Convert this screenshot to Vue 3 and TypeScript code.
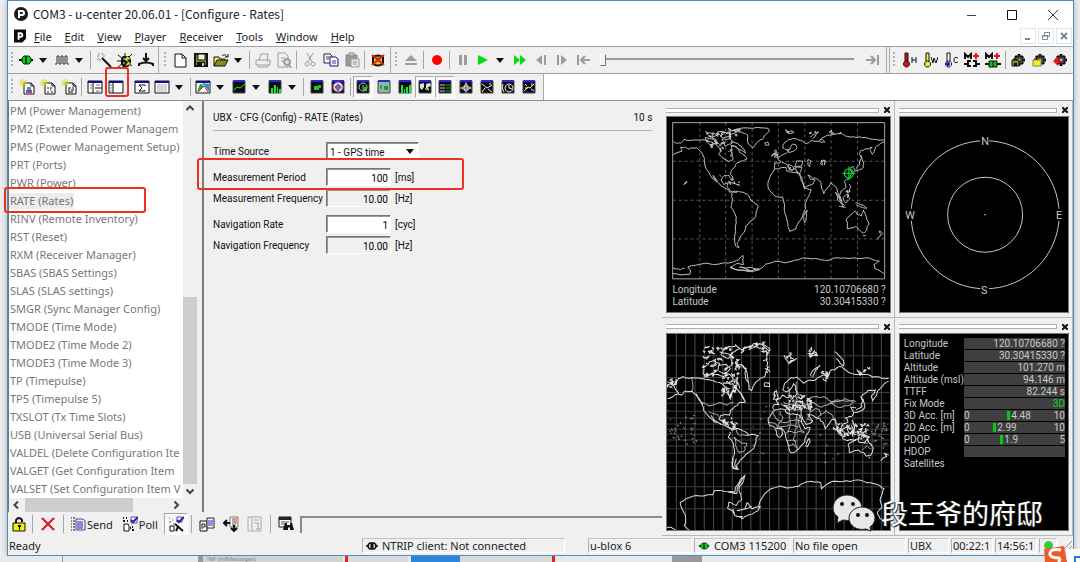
<script setup lang="ts">
import { h, ref, type FunctionalComponent } from 'vue'

type Shape = [d: string, fill: string, stroke?: string, width?: number]
type Tool = { k: 'icon' | 'split' | 'sep' | 'slider'; icon?: string; label?: string; pressed?: boolean }

const K = '#111'
const G = '#9c9c9c'
const NAVY = '#10108c'
const frame = (body: string): Shape[] => [['M1 2h14v12H1z', body, K, 1], ['M1 2h14v2H1z', NAVY]]
const dark = (...rest: Shape[]): Shape[] => [['M2 2h12v12H2z', '#0c0c0c', '#444', 1], ['M2 1h12v2H2z', '#2a2ad0'], ...rest]
const sheet: Shape[] = [['M5 4h7l3 3v8H5z', '#fff', K, 1], ['M12 4v3h3', 'none', K, 1], ['M1 1l6 6M7 1L1 7M4 0v8M0 4h8', 'none', '#d8d820', 1]]
const gear: Shape[] = [['M8 2v12M2 8h12M4 4l8 8M12 4l-8 8', 'none', K, 3], ['M8 4a4 4 0 1 0 .1 0z', '#555', K, 1], ['M8 6a2 2 0 1 0 .1 0z', '#ddd', K, 1]]
const thermo = (c: string): Shape[] => [['M4 1h3v9H4z', c, K, 1], ['M5.500 9a3 3 0 1 0 .1 0z', c, K, 1]]

const icons: Record<string, Shape[]> = {
  plug: [['M1 8h14', 'none', K, 2], ['M4 6l2-2h5l2 2v4l-2 2H6l-2-2z', '#1c1', '#031', 1], ['M8 4v8', 'none', '#042', 2]],
  unplug: [['M0 8h3M13 8h3', 'none', K, 2], ['M7 4H5L3 6v4l2 2h2zM9 4h2l2 2v4l-2 2H9z', '#ddd', K, 2]],
  wave: [['M1 12h2V4h2v8h2V4h2v8h2V4h2v8h2', 'none', '#333', 1]],
  wand: [['M6 6l9 9', 'none', K, 2], ['M3 1v2M1 4h2M7 1L6 3M1 8l2-2M9 4H7M4 9V7', 'none', '#887', 1]],
  bug: [['M6 4h6l2 3v5l-3 3H6l-2-3V7z', K], ['M1 3l4 3M0 9h5M1 15l4-3M15 2l-3 3M15 14l-4-3M8 1v3', 'none', K, 1], ['M10 4l4 3-4 1 4 4-6 2 3-4-3-2z', '#e3d41c'], ['M6 7h3M6 11h2', 'none', '#eee', 1]],
  dock: [['M8 1v8M5 6l3 3 3-3', 'none', K, 2], ['M1 14v-2q7-3 14 0v2', 'none', K, 2]],
  blank: [['M3 2h7l4 4v9H3z', '#fff', K, 1], ['M10 2v4h4', 'none', K, 1]],
  save: [['M2 2h12v12H2z', '#8a8a18', K, 2], ['M5 2h7v6H5z', '#eee', K, 1], ['M4 10h8v4H4z', K], ['M9 11h2v3H9z', '#ccc']],
  open: [['M1 14V5h5l1 2h5v2', '#f0ec70', K, 1], ['M1 14l3-6h11l-3 6z', '#8d8a1a', K, 1], ['M9 4q3-3 5 1M12 5h3V2', 'none', K, 1]],
  print: [['M4 8l2-6h7l-1 6M1 8h14v5H1zM3 13v2h10v-2M12 10h1', 'none', G, 1]],
  preview: [['M2 1h7l3 3v11H2zM5 6h4M5 9h3', 'none', G, 1], ['M11 7a3 3 0 1 0 .1 0zM13 13l2 3', '#ddd', G, 2]],
  cut: [['M5 1l5 9M11 1L6 10M5 10a2 2 0 1 0 .1 0zM11 10a2 2 0 1 0 .1 0z', 'none', G, 1]],
  copy: [['M1 2h6l2 2v7H1z', '#fff', '#223', 1], ['M7 5h6l2 2v7H7z', '#fff', NAVY, 1], ['M3 5h4M3 7h3M9 9h4M9 11h4', 'none', '#338', 1]],
  paste: [['M2 3h11v11H2z', '#999', '#888', 1], ['M5 1h5v3H5z', '#ccc', '#888', 1], ['M7 7h8v8H7z', '#e6e6e6', '#999', 1], ['M9 10h4M9 12h4', 'none', '#999', 1]],
  purge: [['M3 5q5-3 10 0v7q-5 3-10 0z', '#e0c81c', K, 2], ['M3 5q5 3 10 0', 'none', K, 1], ['M2 3l12 10M14 3L2 13', 'none', '#e2231a', 2]],
  eject: [['M8 3l6 6H2zM2 11h12v2H2z', G]],
  record: [['M8 3a5 5 0 1 0 .1 0z', '#f00']],
  pause: [['M4 3h3v10H4zM9 3h3v10H9z', G]],
  play: [['M3 3l10 5-10 5z', '#0d1']],
  fast: [['M2 3l6 5-6 5zM8 3l6 5-6 5z', '#0d1']],
  back: [['M9 3v10L3 8zM11 3h2v10h-2z', G]],
  fwd: [['M7 3v10l6-5zM3 3h2v10H3z', G]],
  home: [['M3 3v10M15 8H6M10 4L6 8l4 4', 'none', G, 2]],
  end: [['M13 3v10M1 8h9M6 4l4 4-4 4', 'none', G, 2]],
  hot: [...thermo('#d11'), ['M11 5v6M15 5v6M11 8h4', 'none', K, 1]],
  warm: [...thermo('#ee3'), ['M9 5l2 6 1-5 2 5 2-6', 'none', K, 1]],
  cold: [...thermo('#fff'), ['M5 10a2 2 0 1 0 .1 0z', '#11c'], ['M15 6q-4-2-4 2t4 2', 'none', K, 1]],
  memo: [['M1 7V2l3 3 3-3v5', 'none', K, 2], ['M12 1v6M9 4h6', 'none', '#e11', 2], ['M0 12h3M7 9H4v5h3M9 9h3v5H9M13 12h3', 'none', K, 2]],
  memoOn: [['M1 7V2l3 3 3-3v5', 'none', K, 2], ['M12 1v6M9 4h6', 'none', '#e11', 2], ['M0 12h16', 'none', K, 2], ['M4 9h8v6H4z', '#1b2', K, 1], ['M8 9v6', 'none', K, 1]],
  gearSave: [...gear, ['M1 8h7v6H1z', '#8a8a18', K, 1], ['M3 11h3v3H3z', K]],
  gearOpen: [...gear, ['M1 8h8v6H1z', '#f4ee30', '#883', 1]],
  gearRed: [...gear, ['M0 9l5-4v3h3v3H5v3z', '#e11']],
  newTable: [...sheet, ['M7 11h6v3H7z', '#a3c'], ['M8 8h4v3H8z', '#2b5']],
  newBin: [...sheet, ['M8 8v2M8 12v2M11 8v2M12 12v2M10 11h1', 'none', K, 1]],
  newText: [...sheet, ['M7 9h3M11 9h2M7 11h2M10 11h3M7 13h5', 'none', K, 1]],
  split: [...frame('#fff'), ['M6 4v10M8 9h7', 'none', K, 1], ['M3 6h2M3 9h2M9 6h4M9 12h4', 'none', '#777', 1]],
  pane: [...frame('#fff'), ['M5 4v10', 'none', K, 1], ['M2 6h2M2 9h2M2 12h2', 'none', '#777', 1]],
  sigma: [...frame('#fff'), ['M11 7V6H5l3 3-3 3h6v-1', 'none', K, 1]],
  table: [...frame('#fff'), ['M3 6h10M3 8h10M3 10h10M3 12h10', 'none', '#aab', 1]],
  chart: [...frame('#fff'), ['M2 13l3-8 4 1-3 4z', '#1a3'], ['M7 4l7 1v8l-4-6z', '#28e'], ['M3 13l6-6 4 6', 'none', '#c22', 1]],
  line: dark(['M3 11l3-3 3 1 5-4', 'none', '#1e3', 1]),
  bars: dark(['M4 9h2v5H4zM7 6h2v8H7zM10 8h1v6h-1zM12 10h2v4h-2z', '#1e3']),
  dots: dark(['M5 7h5v4H5z', '#1c3'], ['M9 6h3v3H9z', '#2a6']),
  globe: dark(['M8 3a5 5 0 1 0 .1 0z', '#dde', '#a3a', 1], ['M5 8l3-3 3 3-3 4z', '#28d', '#d33', 1]),
  radar: dark(['M8 4a4 4 0 1 0 .1 0zM8 6v4l4 2', 'none', '#aca', 1], ['M9 8h3v3H9z', '#1c3']),
  map: [['M2 2h12v12H2z', '#8b9', '#444', 1], ['M2 1h12v2H2z', '#2a2ad0'], ['M8 7h4v4H8z', '#385'], ['M4 6h2v4H4z', '#587']],
  levels: dark(['M4 6h2v8H4zM7 10h1v4H7zM9 8h2v6H9zM12 6h2v8h-2z', '#1e3']),
  world: dark(['M3 5l4-1v4l-2 3-2-2zM9 5l4-1 1 3-3 1 1 4-3-2z', '#dedede'], ['M8 9h2v2H8z', '#1c3']),
  list: dark(['M3 6h5M3 9h5M3 12h5', 'none', '#ccc', 1], ['M9 6h5M9 9h5M9 12h5', 'none', '#1b3', 1]),
  compass: dark(['M8 3l2 4 4 2-4 2-2 3-2-3-4-2 4-2z', '#ddd'], ['M8 5v8M4 9h8', 'none', '#666', 1]),
  gauge: dark(['M3 5l5 4M8 9l5-3M9 10l4 3M3 13l3-4M11 4v2', 'none', '#eee', 1]),
  clock: dark(['M9 5a4 4 0 1 0 .1 0zM9 6v3l3 1M3 5q-2 4 1 8', 'none', '#eee', 1]),
  trend: dark(['M3 12l4-4 2 1 4-4M4 5l2 2M10 10l3 2M4 9h3M11 4v3', 'none', '#eee', 1]),
  lock: [['M5 8V4q3-4 6 0v2', 'none', K, 2], ['M2 7h12v8H2z', '#f2ee12', K, 1], ['M7 9h3v2H9v3H8v-3H7z', K]],
  cross: [['M2 2l12 12M14 2L2 14', 'none', '#d8161b', 2]],
  send: [['M6 3h7l2 2v9H6z', '#eef', '#448', 1], ['M7 6h6M7 8h6M7 10h6M7 12h6', 'none', '#22a', 1], ['M1 2h1M3 2h2M1 5h1M3 5h2M1 8h1M3 8h2M1 11h1M3 11h2M1 14h1M3 14h2', 'none', K, 1]],
  poll: [['M2 8h4l1 2v5H2z', '#fff', K, 1], ['M1 2h1M4 2h1M1 5h2M5 5h1M10 11h1M10 14h2M8 12h1', 'none', K, 2], ['M9 1h6v6H9z', '#fff', '#557', 1], ['M9 4l2 2 5-5', 'none', '#22c', 2]],
  auto: [['M2 10h4v5H2z', '#fff', K, 1], ['M1 2h1M4 4h1M1 6h2M5 8h2', 'none', '#665', 1], ['M9 1h5v5H9z', '#fff', '#557', 1], ['M9 4l2 2 5-5', 'none', '#22c', 2], ['M7 8l8 7M8 15l2-4', 'none', K, 2]],
  pages: [['M1 5h7v10H1z', '#fff', K, 1], ['M3 13V8h3v3H4', 'none', K, 1], ['M8 2h7v10H8z', '#fff', '#223', 1], ['M9 5h5M9 7h5M9 9h5', 'none', '#22c', 1]],
  move: [['M7 1h8v10H7z', '#fff', '#777', 1], ['M9 3h5M9 5h5', 'none', '#d22', 1], ['M9 7h5M9 9h4', 'none', '#282', 1], ['M7 7H1M4 4L1 7l3 3M11 9v6M8 12l3 3 3-3', 'none', K, 2]],
  ghost: [['M1 1h13v14H1zM5 1v14M7 4h5M7 7h5M11 7v7M9 12l2 2 2-2', 'none', '#aaa', 1]],
  find: [['M1 1h12v10H1z', '#fff', K, 1], ['M1 1h12v3H1z', '#223'], ['M3 6h8M3 8h5', 'none', '#555', 1], ['M7 7h2v2h3V7h2l2 7h-4v-3h-2v3H5z', K]],
}

const Glyph: FunctionalComponent<{ name: string }> = (p) =>
  h('svg', { width: 16, height: 16, viewBox: '0 0 16 16', 'aria-hidden': 'true' },
    (icons[p.name] ?? []).map(([d, fill, stroke, w]) =>
      h('path', { d, fill, stroke: stroke ?? 'none', 'stroke-width': w ?? 0 })))
Glyph.props = ['name']

const i = (icon: string, label: string, pressed = false): Tool => ({ k: 'icon', icon, label, pressed })
const s = (icon: string, label: string): Tool => ({ k: 'split', icon, label })
const sep: Tool = { k: 'sep' }

const bands: { cls: string; tools: Tool[] }[] = [
  { cls: 'b1', tools: [s('plug', 'Connection'), s('wave', 'Baudrate'), sep, i('wand', 'Autobauding'), i('bug', 'Debug messages'), i('dock', 'Download')] },
  { cls: 'b2', tools: [i('blank', 'New'), i('save', 'Save'), s('open', 'Open'), sep, i('print', 'Print'), i('preview', 'Print preview'), sep, i('cut', 'Cut'), i('copy', 'Copy'), i('paste', 'Paste'), sep, i('purge', 'Clear database')] },
  { cls: 'b3', tools: [i('eject', 'Eject'), sep, i('record', 'Record'), sep, i('pause', 'Pause'), s('play', 'Play'), i('fast', 'Fast forward'), i('back', 'Step back'), i('fwd', 'Step forward'), i('home', 'Go to start'), { k: 'slider' }, i('end', 'Go to end')] },
  { cls: 'b4', tools: [i('hot', 'Hotstart'), i('warm', 'Warmstart'), i('cold', 'Coldstart'), i('memo', 'Save settings'), i('memoOn', 'Save settings now'), sep, i('gearSave', 'Save configuration'), i('gearOpen', 'Load configuration'), i('gearRed', 'Revert configuration')] },
]
const viewTools: Tool[] = [
  i('newTable', 'New table'), i('newBin', 'New binary console'), i('newText', 'New text console'), sep,
  i('split', 'Messages view'), i('pane', 'Configuration view'), sep,
  i('sigma', 'Statistic view'), s('table', 'Table view'), sep,
  s('chart', 'Chart view'), s('line', 'Histogram'), s('bars', 'Bar view'), sep,
  i('dots', 'Deviation map'), i('globe', 'Sky view'), sep,
  i('radar', 'Satellite position', true), i('map', 'Map'), i('levels', 'Satellite level'), i('world', 'World position', true),
  i('list', 'Data view', true), i('compass', 'Compass'), i('gauge', 'Speed'), i('clock', 'Clock'), i('trend', 'Altitude'),
]

const menus = ['File', 'Edit', 'View', 'Player', 'Receiver', 'Tools', 'Window', 'Help']
const messages = [
  'PM (Power Management)', 'PM2 (Extended Power Managem', 'PMS (Power Management Setup)', 'PRT (Ports)', 'PWR (Power)',
  'RATE (Rates)', 'RINV (Remote Inventory)', 'RST (Reset)', 'RXM (Receiver Manager)', 'SBAS (SBAS Settings)',
  'SLAS (SLAS settings)', 'SMGR (Sync Manager Config)', 'TMODE (Time Mode)', 'TMODE2 (Time Mode 2)', 'TMODE3 (Time Mode 3)',
  'TP (Timepulse)', 'TP5 (Timepulse 5)', 'TXSLOT (Tx Time Slots)', 'USB (Universal Serial Bus)',
  'VALDEL (Delete Configuration Ite', 'VALGET (Get Configuration Item', 'VALSET (Set Configuration Item V',
]
const selected = ref('RATE (Rates)')

const groups = [
  [{ id: 'period', label: 'Measurement Period', value: '100', unit: '[ms]', ro: false }, { id: 'mfreq', label: 'Measurement Frequency', value: '10.00', unit: '[Hz]', ro: true }],
  [{ id: 'nrate', label: 'Navigation Rate', value: '1', unit: '[cyc]', ro: false }, { id: 'nfreq', label: 'Navigation Frequency', value: '10.00', unit: '[Hz]', ro: true }],
]

const data = [
  { n: 'Longitude', v: '120.10706680 ?' }, { n: 'Latitude', v: '30.30415330 ?' }, { n: 'Altitude', v: '101.270 m' },
  { n: 'Altitude (msl)', v: '94.146 m' }, { n: 'TTFF', v: '82.244 s' }, { n: 'Fix Mode', v: '3D', green: true },
  { n: '3D Acc. [m]', min: '0', v: '10', bar: '4.48', at: 43 }, { n: '2D Acc. [m]', min: '0', v: '10', bar: '2.99', at: 29 },
  { n: 'PDOP', min: '0', v: '5', bar: '1.9', at: 36 }, { n: 'HDOP', v: '' }, { n: 'Satellites' },
]

// Coastlines are coarse polylines; midpoint displacement with a seeded generator gives them a ragged shore.
let seed = 7
const rnd = () => ((seed = (seed * 16807) % 2147483647) / 2147483647) - 0.5
function coast(lines: string[], rough: number, depth: number): string {
  return lines.map((line) => {
    const n = line.trim().split(/[ ,]+/).map(Number)
    let pts: number[][] = []
    for (let a = 0; a < n.length; a += 2) pts.push([n[a], n[a + 1]])
    for (let r = 0; r < depth; r++) {
      const next: number[][] = [pts[0]]
      for (let a = 1; a < pts.length; a++) {
        const [p, q] = [pts[a - 1], pts[a]]
        const len = Math.hypot(q[0] - p[0], q[1] - p[1]) * rough
        next.push([(p[0] + q[0]) / 2 + rnd() * len, (p[1] + q[1]) / 2 + rnd() * len], q)
      }
      pts = next
    }
    return 'M' + pts.map((p) => `${Math.round(p[0])} ${Math.round(p[1])}`).join('L')
  }).join('')
}
function isles(boxes: number[][], size: number): string {
  let d = ''
  for (const [x, y, w, hh, count] of boxes) {
    for (let c = 0; c < count; c++) {
      const r = () => Math.round(rnd() * size)
      d += `M${Math.round(x + (rnd() + 0.5) * w)} ${Math.round(y + (rnd() + 0.5) * hh)}l${r()} ${r()} ${r()} ${r()} ${r()} ${r()}z`
    }
  }
  return d
}

const worldA = coast([
  '40,125 50,130 62,130 72,118 105,120 135,120 160,128 178,142 182,152 178,165 190,176 208,186 220,180 218,165 214,150 216,138 230,140 240,158 255,166 262,178 245,184 232,190 226,202 216,212 212,225 220,236 216,240 208,228 192,230 184,242 192,256 206,250 202,262 212,276 232,280',
  '40,165 66,154 62,142 76,142 86,148 110,144 126,158 134,176 136,200 148,220 158,238 170,248 160,228 172,244 182,258 204,270 214,282',
  '216,282 224,276 240,278 264,286 274,304 296,322 290,340 286,358 272,368 254,402 240,420 233,436 238,450 228,444 228,400 230,355 214,325 218,300 216,282',
  '232,88 270,84 298,82 326,84 330,94 318,104 312,115 294,126 280,144 270,136 264,120 264,104 250,98 232,88',
  '345,208 362,206 380,203 382,215 396,218 420,222 426,244 434,266 456,272 448,292 438,312 440,328 432,345 420,368 410,392 392,400 386,380 380,350 376,318 370,294 345,290 328,270 326,252 332,232 345,208',
  '434,348 444,334 442,354 436,372 432,360 434,348',
  '345,206 346,190 364,188 354,174 372,164 384,158 386,148 390,160 404,154 412,146 410,134 400,132 392,148 380,150 370,144 374,130 394,118 412,116 432,124 440,132 456,122 480,124 492,112 520,104 548,100 560,108 590,112 620,112 650,118 676,120',
  '676,126 664,132 650,142 640,164 634,152 640,142 618,148 604,154 602,164 608,176 602,196 592,204',
  '368,188 380,194 390,208 388,194 404,206 410,212 410,202 428,204 424,216 422,224 430,244 436,266 462,254 468,242 452,238 446,226 460,236 476,240 486,250 494,284 500,272 516,250 530,262 536,280 548,308 542,290 546,276 562,264 556,246 572,238 580,222 572,206 582,200 590,212 596,204',
  '406,202 412,184 430,184 426,200 406,202', '446,180 456,184 452,202 446,196 446,180',
  '346,152 350,150 356,172 344,172 350,164 346,152', '316,128 326,126 328,136 318,136 316,128',
  '584,216 600,212 614,204 612,184 606,166', '530,280 542,300 556,320 552,324 536,304 530,280', '552,296 566,284 572,300 560,312 552,296',
  '570,254 576,262 572,280', '590,312 600,314 624,328 612,326 592,318', '540,322 560,326',
  '562,362 566,392 590,384 602,396 614,404 624,396 630,374 622,352 614,334 608,352 594,346 590,336 576,348 562,362',
  '656,424 668,410 662,398 674,408', '612,412 622,412',
  '38,510 62,516 74,512', '38,528 90,530 92,520 84,508 110,502 150,498 180,498 214,494 236,486 250,472 252,500 230,498 212,508 240,518 270,522 300,514 320,498 346,490 400,490 430,480 480,484 500,488 540,480 570,482 620,480 650,488 662,490 646,500 650,514 664,520 678,528',
  '212,510 300,516 240,508 276,520', '140,100 160,98 176,104 150,110 140,100', '136,112 160,118 174,126 150,134 140,126 136,112',
  '172,96 200,98 212,90 206,110 190,114 172,96', '212,92 232,86 244,88 222,100 210,104', '186,118 210,116 226,128 246,140 258,160 240,150 226,140 210,132 196,138 186,118',
  '206,156 218,148 214,172', '454,112 470,98 478,96 460,116', '480,122 488,118 498,126 482,126', '380,96 400,92 404,98 386,100', '180,226 184,232', '210,248 240,258 232,254',
], 0.2, 2) + isles([[140, 96, 75, 50, 26], [205, 85, 45, 20, 6], [380, 94, 180, 8, 8], [210, 240, 30, 16, 4], [560, 270, 20, 30, 4], [344, 150, 16, 26, 3], [460, 180, 40, 10, 4], [388, 204, 30, 14, 3], [72, 244, 8, 4, 1]], 12)

const bordersB = coast([
  '96,188 96,228', '124,262 180,262 200,270 222,262', '148,290 172,298 176,304', '222,366 240,378 262,384 256,404 240,412 232,400 222,366', '230,344 242,360 268,360',
  '340,290 356,316 380,322 402,316 424,320', '326,322 352,330 372,334 398,330 420,336', '388,290 392,318 384,352', '412,300 410,340 402,370 414,396', '380,352 410,352 434,350', '384,376 412,378', '384,392 402,386 414,400', '362,288 366,318 352,340', '424,300 424,344 436,352',
  '386,240 400,260 424,258 440,270 462,262 486,276 500,270 520,258 552,256 590,260', '440,256 472,244 500,248 516,260', '512,266 540,276 566,272 580,262 556,250 526,256 512,266', '372,260 390,268 380,282 396,286', '400,240 412,248 408,270 430,274', '388,264 402,272 420,268', '396,278 412,284 430,280', '436,276 452,290 478,282 484,300 470,312', '484,300 500,286 520,302 528,312', '452,290 444,312 460,316', '528,312 536,330', '544,322 552,336', '384,216 390,240 402,248', '412,200 410,228 424,240',
], 0.35, 2)
const worldB = coast([
  '24,200 40,210 50,208 56,190 70,184 94,188 130,190 156,196 180,202 200,216 206,234 212,252 216,236 222,220 230,214 244,236 258,260 240,262 226,274 212,286 210,300 200,298 184,300 178,312 192,324 206,320 206,334 220,342 232,342',
  '24,250 44,240 56,236 66,240 74,228 96,228 108,238 122,256 128,270 132,286 146,302 164,320 180,324 204,336 216,344',
  '216,346 230,340 258,350 268,360 296,362 288,384 282,400 262,416 244,432 232,448 236,462 222,456 218,430 224,400 222,386 206,366 212,350',
  '222,430 218,458 234,462 226,446 230,430', '40,208 58,238', '110,236 130,266', '154,300 184,328',
  '246,104 262,98 290,84 318,92 332,104 322,116 324,142 322,168 316,184 290,200 276,226 268,222 258,190 260,160 246,148 226,146',
  '250,100 280,92 300,100 322,100', '244,150 262,170 268,216', '268,104 300,86 330,108',
  '130,160 150,140 164,136 180,146 176,164 150,180 130,176 134,162', '184,120 208,94 230,92 240,100 220,112 206,130 186,122', '176,152 200,148 212,160 196,176 178,168', '190,204 220,206 242,232 256,258', '204,176 230,196 240,220', '198,230 212,240 210,250', '180,110 214,120 216,150 196,160', '150,176 190,184 206,180',
  '340,288 350,284 378,284 380,292 408,298 420,300 426,320 436,340 452,338 440,360 436,380 420,398 408,410 392,410 384,380 378,356 366,338 350,340 332,332 326,310 340,288',
  '346,342 352,360 362,366 370,356 366,342 350,340', '440,388 448,370 452,380 444,394 438,390',
  '342,284 342,270 358,268 350,256 362,250 370,240 384,248 394,240 400,250 412,236 410,216 402,206 392,224 380,230 370,222 376,204 394,188 412,186 432,204 446,196 468,194 480,186 490,180 504,186 512,168 540,154 560,166 580,176 610,178 640,186 664,188 688,190',
  '688,198 670,212 656,226 640,256 636,244 648,224 626,226 612,238 604,244 610,256 606,276 590,284', '586,292 602,288 616,278 614,262 606,246',
  '366,266 380,274 390,286 388,272 402,282 408,286 410,276 428,278 424,296 430,312 440,328 460,318 452,306 444,298 466,304 480,310 490,320 498,340 506,330 520,312 530,320 534,336 546,358 544,340 552,326 566,320 558,308 576,304 584,292 574,276 590,278',
  '406,272 412,258 430,258 426,272 406,272', '444,252 456,256 456,276 446,270 444,252', '344,230 350,226 356,250 342,252 348,242 344,230', '340,236 346,238 342,246', '314,204 330,204 330,214 316,214 314,204',
  '376,130 390,122 404,134 388,146 376,130', '444,116 470,112 474,122 448,122', '454,184 462,164 482,150 468,166 460,188', '526,110 550,134 552,152 530,130', '484,172 504,176 500,198 490,190',
  '530,338 542,352 556,364 550,366 536,350 530,338', '548,344 562,334 568,350 556,360 548,344', '578,314 586,330 584,346 576,330', '570,356 578,346 580,364', '590,350 604,350 632,366 616,364 592,356', '548,370 590,376',
  '566,386 570,412 596,404 612,412 620,422 634,420 642,400 634,386 624,370 616,384 600,382 596,370 580,378 566,386', '664,436 682,424 676,414 688,420', '628,424 632,430',
  '22,636 36,636 50,646', '88,644 74,630 72,590 62,560 84,548 110,540 160,538 164,526 196,528 226,530 234,508 244,490 256,480 250,500 238,524 246,552 230,570 208,560 204,578 226,600 248,610 278,596 302,574 278,580 262,562 256,580 232,586 276,572', '296,576 310,544 334,520 400,516 430,504 456,498 484,502 486,520 510,502 560,496 600,494 648,506 674,520 664,546 668,576 654,590 662,610 686,618',
  '206,530 232,534 250,488', '220,580 226,600 250,604',
], 0.25, 2) + isles([[130, 95, 110, 90, 44], [180, 170, 55, 70, 22], [376, 118, 30, 26, 8], [530, 326, 100, 44, 30], [370, 240, 90, 50, 24], [180, 300, 60, 36, 12], [486, 170, 20, 26, 6], [26, 188, 30, 30, 8], [440, 108, 34, 14, 6], [250, 85, 76, 22, 12], [316, 104, 12, 70, 8], [600, 160, 40, 22, 6]], 12)
const specks = isles([[26, 280, 90, 110, 34], [610, 320, 76, 80, 50], [280, 270, 50, 190, 12], [480, 360, 60, 90, 6]], 6)
const gridX = Array.from({ length: 23 }, (_, a) => 50 + a * 28)
const gridY = [122, 187, 232, 264, 288, 308, 326, 342, 357, 374, 392, 414, 440, 474, 514, 580]
</script>

<template>
  <div class="desktop">
    <main class="window">
      <header class="titlebar">
        <svg class="logo" viewBox="0 0 14 14"><circle cx="7" cy="7" r="7" fill="#1b1b22" /><path d="M5 11V4h3a2 2 0 0 1 0 4H6" fill="none" stroke="#fff" stroke-width="2" /></svg>
        <h1>COM3 - u-center 20.06.01 - [Configure - Rates]</h1>
        <div class="caption">
          <button aria-label="Minimize"><svg viewBox="0 0 12 12"><path d="M2 6.500h9" stroke="#444" /></svg></button>
          <button aria-label="Maximize"><svg viewBox="0 0 12 12"><path d="M1.500 1.500h9v9h-9z" fill="none" stroke="#111" /></svg></button>
          <button aria-label="Close"><svg viewBox="0 0 12 12"><path d="M1 1l10 10M11 1L1 11" stroke="#333" /></svg></button>
        </div>
      </header>

      <nav class="menubar">
        <svg class="logo" viewBox="0 0 13 14"><path d="M0 0h13v10l-4 4H0z" fill="#0c0c10" /><path d="M5 11V4h2a2 2 0 0 1 0 4H6" fill="none" stroke="#fff" stroke-width="2" /></svg>
        <button v-for="m in menus" :key="m"><u>{{ m[0] }}</u>{{ m.slice(1) }}</button>
        <div class="mdi">
          <button aria-label="Minimize child"><svg viewBox="0 0 10 10"><path d="M2 8h5" stroke="#789" stroke-width="2" /></svg></button>
          <button aria-label="Restore child"><svg viewBox="0 0 10 10"><path d="M3.500 4V1.500h5v4H7M1.500 4.500h5v4h-5zM1 5h6" fill="none" stroke="#789" /></svg></button>
          <button aria-label="Close child"><svg viewBox="0 0 10 10"><path d="M2 2l6 6M8 2L2 8" stroke="#789" stroke-width="2" /></svg></button>
        </div>
      </nav>

      <div class="bar-row">
        <div v-for="b in bands" :key="b.cls" class="band" :class="b.cls">
          <i class="grip"></i>
          <template v-for="(t, n) in b.tools" :key="n">
            <i v-if="t.k === 'sep'" class="sep"></i>
            <input v-else-if="t.k === 'slider'" class="track" type="range" min="0" max="100" value="0" aria-label="Playback position" />
            <button v-else class="tool" :class="{ split: t.k === 'split' }" :aria-label="t.label">
              <Glyph :name="t.icon!" /><i v-if="t.k === 'split'" class="drop"></i>
            </button>
          </template>
        </div>
      </div>

      <div class="bar-row views">
        <div class="band bv">
          <i class="grip"></i>
          <template v-for="(t, n) in viewTools" :key="n">
            <i v-if="t.k === 'sep'" class="sep"></i>
            <button v-else class="tool" :class="{ split: t.k === 'split', pressed: t.pressed }" :aria-label="t.label">
              <Glyph :name="t.icon!" /><i v-if="t.k === 'split'" class="drop"></i>
            </button>
          </template>
        </div>
      </div>

      <section class="workspace">
        <div class="editor">
          <div class="panes">
            <aside class="tree">
              <div class="tree-main">
                <ul>
                  <li v-for="m in messages" :key="m">
                    <button :class="{ on: m === selected }" @click="selected = m">{{ m }}</button>
                  </li>
                </ul>
                <div class="vscroll">
                  <svg viewBox="0 0 14 14"><path d="M3.500 9L7 5.500 10.500 9" /></svg>
                  <div class="thumb"></div>
                  <svg viewBox="0 0 14 14"><path d="M3.500 5.500L7 9l3.500-3.500" /></svg>
                </div>
              </div>
              <div class="hscroll">
                <svg viewBox="0 0 14 14"><path d="M9 3.500L5.500 7 9 10.500" /></svg>
                <div class="rail"><div class="thumb"></div></div>
                <svg viewBox="0 0 14 14"><path d="M5.500 3.500L9 7l-3.500 3.500" /></svg>
              </div>
            </aside>

            <form class="form" @submit.prevent>
              <div class="form-head"><span>UBX - CFG (Config) - RATE (Rates)</span><span>10 s</span></div>
              <div class="group">
                <div class="field">
                  <label for="source">Time Source</label>
                  <span class="pick"><select id="source"><option>1 - GPS time</option></select><i class="drop"></i></span>
                </div>
              </div>
              <div v-for="(g, n) in groups" :key="n" class="group">
                <div v-for="f in g" :key="f.id" class="field">
                  <label :for="f.id">{{ f.label }}</label>
                  <input :id="f.id" type="text" :value="f.value" :readonly="f.ro" />
                  <span>{{ f.unit }}</span>
                </div>
              </div>
            </form>
          </div>

          <div class="actions">
            <button class="tool" aria-label="Lock"><Glyph name="lock" /></button><i class="sep"></i>
            <button class="tool" aria-label="Delete"><Glyph name="cross" /></button><i class="sep"></i>
            <button class="text"><Glyph name="send" />Send</button>
            <button class="text"><Glyph name="poll" />Poll</button>
            <button class="tool pressed" aria-label="Auto poll"><Glyph name="auto" /></button><i class="sep"></i>
            <button class="tool" aria-label="Copy page"><Glyph name="pages" /></button>
            <button class="tool" aria-label="Transfer"><Glyph name="move" /></button>
            <button class="tool" aria-label="Details"><Glyph name="ghost" /></button><i class="sep"></i>
            <button class="tool" aria-label="Find"><Glyph name="find" /></button>
            <input type="text" class="query" aria-label="Search" />
          </div>
        </div>

        <div class="docks">
          <article class="dock">
            <div class="dock-head"><i></i><button aria-label="Close map"><svg viewBox="0 0 6 6"><path d="M0 0l6 6M6 0L0 6" /></svg></button></div>
            <div class="screen">
              <svg class="fill" viewBox="36 65 644 481" preserveAspectRatio="none">
                <g fill="none">
                  <path d="M120 67v477M198 67v477M278 67v477M357 67v477M437 67v477M516 67v477M596 67v477M38 185h640M38 304h640M38 422h640" stroke="#5a5a5a" stroke-width="3" stroke-dasharray="9 9" />
                  <path :d="worldA" stroke="#c4c4c4" stroke-width="3" />
                  <path d="M38 67h640v477H38z" stroke="#aaa" stroke-width="3" />
                  <path d="M570 208a14 14 0 1 0 .1 0zM570 202v40M550 222h40" stroke="#0c2" stroke-width="4" />
                </g>
              </svg>
              <dl><dt>Longitude</dt><dd>120.10706680 ?</dd><dt>Latitude</dt><dd>30.30415330 ?</dd></dl>
            </div>
          </article>

          <article class="dock">
            <div class="dock-head"><i></i><button aria-label="Close compass"><svg viewBox="0 0 6 6"><path d="M0 0l6 6M6 0L0 6" /></svg></button></div>
            <div class="screen flush">
              <svg class="fill" viewBox="0 0 168 197">
                <g fill="none" stroke="#c8c8c8"><circle cx="85" cy="99" r="75" /><circle cx="85" cy="99" r="38" /><path d="M84 99h2" /></g>
                <path d="M80 18h9v12h-9zM5 93h12v12H5zM155 93h10v12h-10zM80 168h9v12h-9z" fill="#000" />
                <g fill="#c8c8c8" font-size="11" text-anchor="middle"><text x="85" y="28">N</text><text x="9" y="103">W</text><text x="160" y="103">E</text><text x="84" y="179">S</text></g>
              </svg>
            </div>
          </article>

          <article class="dock">
            <div class="dock-head"><i></i><button aria-label="Close world"><svg viewBox="0 0 6 6"><path d="M0 0l6 6M6 0L0 6" /></svg></button></div>
            <div class="screen flush">
              <svg class="fill" viewBox="22 57 668 588" preserveAspectRatio="none">
                <g fill="none">
                  <path v-for="x in gridX" :key="'x' + x" :d="`M${x} 57v588`" stroke="#4c4c4c" stroke-width="3" />
                  <path v-for="y in gridY" :key="'y' + y" :d="`M22 ${y}h668`" stroke="#404040" stroke-width="3" />
                  <path :d="specks" stroke="#999" stroke-width="2" />
                  <path :d="bordersB" stroke="#a5a5a5" stroke-width="3" />
                  <path :d="worldB" stroke="#dcdcdc" stroke-width="3" />
                </g>
              </svg>
            </div>
          </article>

          <article class="dock">
            <div class="dock-head"><i></i><button aria-label="Close data"><svg viewBox="0 0 6 6"><path d="M0 0l6 6M6 0L0 6" /></svg></button></div>
            <div class="screen data">
              <table>
                <tbody>
                  <tr v-for="d in data" :key="d.n">
                    <th scope="row">{{ d.n }}</th>
                    <td v-if="d.v !== undefined">
                      <div class="cell" :class="{ green: d.green }">
                        <span>{{ d.min }}</span><span>{{ d.v }}</span>
                        <b v-if="d.bar" :style="{ left: d.at + '%' }">{{ d.bar }}</b>
                      </div>
                    </td>
                  </tr>
                </tbody>
              </table>
            </div>
          </article>
        </div>
      </section>

      <footer class="status">
        <span class="ready">Ready</span>
        <span class="cell-s ntrip"><Glyph name="unplug" />NTRIP client: Not connected</span>
        <span class="cell-s gen">u-blox 6</span>
        <span class="cell-s port"><Glyph name="plug" />COM3 115200</span>
        <span class="cell-s file">No file open</span>
        <span class="cell-s proto">UBX</span>
        <span class="cell-s time">00:22:1</span>
        <span class="cell-s time">14:56:1</span>
        <span class="cell-s led"><i></i></span>
        <svg class="size" viewBox="0 0 12 12"><path d="M1 12L12 1M6 12l6-6" stroke="#999" /></svg>
      </footer>
    </main>

    <div class="behind">
      <svg viewBox="0 0 1080 6" preserveAspectRatio="none">
        <path d="M0 0h1080v6H0z" fill="#e9e9ea" /><path d="M62 0h1v6h-1zM198 0h5v6h-5zM672 0h3v6h-3z" fill="#999" /><path d="M203 0h140v6H203z" fill="#d2d2d2" />
        <path d="M345 0h3v6h-3zM552 0h3v6h-3z" fill="#d8232a" /><path d="M348 0h60v6h-60zM460 0h92v6h-92z" fill="#dadada" /><path d="M411 0h49v6h-49z" fill="#2e86dc" /><path d="M675 0h27v6h-27z" fill="#999" />
      </svg>
      <span>INF (InfMessages)</span>
    </div>

    <div class="mark m1"></div>
    <div class="mark m2"></div>
    <div class="mark m3"></div>

    <div class="credit">
      <svg viewBox="0 0 44 38">
        <g stroke="#222" stroke-width="1"><path d="M15 1C7 1 1 7 1 14c0 4 2 7 5 9l-1 6 6-3c9 2 19-3 19-12C30 7 23 1 15 1z" fill="#e8e8e8" /><path d="M30 13c-7 0-13 5-13 11 0 8 8 13 17 11l5 2-1-4c3-2 5-5 5-9 0-6-6-11-13-11z" fill="#e8e8e8" /></g>
        <g fill="#111"><circle cx="10" cy="10" r="2" /><circle cx="21" cy="10" r="2" /><circle cx="26" cy="21" r="2" /><circle cx="35" cy="21" r="2" /></g>
      </svg>
      <span>段王爷的府邸</span>
    </div>

    <div class="ime">
      <svg viewBox="0 0 36 16"><path d="M22 3h14v13H22z" fill="#fff" /><path d="M0 3l20-3 3 16H1z" fill="#ee5a2c" /><path d="M17 4Q7 2 6 7t9 5q2 2-1 4" fill="none" stroke="#fff" stroke-width="3" /><path d="M31 16v-5h5" fill="none" stroke="#1f7fe0" stroke-width="2" /></svg>
    </div>
  </div>
</template>

<style>
html, body { margin: 0; background: #e9e9ec; overflow: hidden; }
</style>

<style scoped>
* { box-sizing: border-box; }
.desktop { position: relative; display: flex; flex-direction: column; min-height: 100vh; background: #ececee; font-family: "Noto Sans", "Open Sans", sans-serif; font-size: 11px; color: #222; }
button { border: 0; padding: 0; margin: 0; background: none; font: inherit; color: inherit; }
.window { flex: 1; display: flex; flex-direction: column; margin: 0 6px 0 7px; border: 1px solid #4a8fc4; background: #f0f0f0; box-shadow: 0 0 5px #aaa; }
.titlebar, .menubar { display: flex; align-items: center; background: #fff; padding-left: 6px; }
.titlebar { height: 25px; }
.titlebar .logo { width: 14px; height: 14px; }
.titlebar h1 { flex: 1; margin: 0 0 0 5px; font-family: "Noto Sans CJK SC", "Noto Sans", sans-serif; font-size: 12px; line-height: 16px; font-weight: 400; white-space: nowrap; }
.caption { display: flex; }
.caption button { width: 41px; height: 24px; }
.caption svg { width: 12px; height: 12px; vertical-align: middle; }
.menubar { height: 20px; padding-right: 1px; gap: 1px; }
.menubar .logo { width: 12px; height: 14px; margin-right: 1px; }
.menubar > button { padding: 0 6px; }
.mdi { display: flex; gap: 2px; margin-left: auto; }
.mdi button { width: 16px; height: 16px; border: 1px solid #e4e6ea; background: #fff; }
.mdi svg { display: block; width: 10px; height: 10px; margin: auto; }
.bar-row { display: flex; height: 27px; border-top: 1px solid #a3a3a3; background: #f0f0f0; }
.bar-row.views { background: #fff; }
.band { display: flex; align-items: center; border-right: 1px solid #a9a9a9; background: #f0f0f0; }
.b1 { width: 151px; }
.b2 { width: 232px; padding-left: 2px; }
.b3 { flex: 1; padding-left: 1px; padding-right: 3px; margin-right: 2px; }
.b4 { width: 184px; border-left: 1px solid #a9a9a9; border-right: 0; }
.bv { padding-right: 4px; }
.grip { flex: none; width: 2px; height: 16px; margin: 0 3px; background: repeating-linear-gradient(#b4b4b4 0 2px, #f0f0f0 2px 4px); }
.sep { flex: none; width: 1px; height: 18px; margin: 0 2px; background: #a6a6a6; }
.tool { flex: none; display: flex; align-items: center; justify-content: center; width: 21px; height: 22px; }
.tool svg, .text svg { flex: none; width: 16px; height: 16px; }
.split { width: 36px; justify-content: flex-start; gap: 5px; padding-left: 2px; }
.drop { display: block; width: 0; border: 4px solid transparent; border-top: 5px solid #111; border-bottom: 0; }
.pressed { border: 1px solid; border-color: #aaa #fff #fff #aaa; background: #f8f8f8; }
.bv .pressed { width: 20px; }
.track { flex: 1; min-width: 40px; height: 18px; margin: 0 8px 0 7px; appearance: none; background: none; }
.track::-webkit-slider-runnable-track { height: 12px; background: linear-gradient(#f0f0f0 4px, #9b9b9b 4px 6px, #f0f0f0 6px); }
.track::-webkit-slider-thumb { appearance: none; width: 6px; height: 12px; background: #f4f4f4; border: 1px solid; border-color: #fff #777 #777 #fff; }

.workspace { flex: 1; display: flex; border-top: 1px solid #8d8d8d; min-height: 0; }
.editor { flex: 655; display: flex; flex-direction: column; min-width: 0; }
.panes { flex: 1; display: flex; gap: 5px; min-height: 0; }
.tree { width: 189px; display: flex; flex-direction: column; border-left: 1px solid #777; }
.tree-main { flex: 1; display: flex; background: #fff; min-height: 0; }
.tree ul { flex: 1; min-width: 0; margin: 0; padding: 1px 0 0; list-style: none; overflow: hidden; }
.tree li { height: 18px; white-space: nowrap; }
.tree li button { height: 16px; margin-top: 1px; padding: 0 1px; font-size: 11px; line-height: 16px; color: #777; }
.tree li .on { background: #ececec; }
.vscroll { width: 14px; display: flex; flex-direction: column; justify-content: space-between; background: #f0f0f0; }
.vscroll svg, .hscroll svg { width: 14px; height: 14px; fill: none; stroke: #444; stroke-width: 2; }
.vscroll .thumb { height: 47%; margin-top: auto; background: #cdcdcd; }
.hscroll { display: flex; height: 14px; margin-right: 14px; }
.hscroll .rail { flex: 1; }
.hscroll .thumb { width: 74%; height: 14px; margin-left: 2px; background: #cdcdcd; }
.form { flex: 1; border-left: 2px solid #7d7d7d; padding: 8px 10px 0 9px; margin: 0; font-family: Roboto, "Liberation Sans", sans-serif; font-size: 10px; color: #111; }
.form-head { display: flex; justify-content: space-between; height: 22px; line-height: 18px; border-bottom: 1px solid #b5b5b5; margin-bottom: 11px; }
.group { display: flex; flex-direction: column; gap: 3px; margin-bottom: 8px; }
.field { display: flex; align-items: center; height: 18px; }
.field label { width: 113px; white-space: nowrap; }
.field span { margin-left: 4px; }
.field input, .pick { border: 1px solid; border-color: #777 #fff #fff #777; box-shadow: inset 1px 1px #999; background: #fff; }
.field input { width: 65px; height: 18px; padding: 2px 2px 0; font: inherit; text-align: right; }
.field input[readonly] { background: #f0f0f0; }
.field .pick { position: relative; display: flex; align-items: center; width: 93px; height: 18px; margin-left: 0; }
.pick select { flex: 1; width: 100%; border: 0; padding: 2px 0 0 3px; appearance: none; background: none; font: inherit; color: inherit; }
.pick .drop { position: absolute; right: 4px; top: 6px; }
.actions { display: flex; align-items: center; height: 24px; }
.actions .sep { margin: 0 3px; }
.actions .tool:not(:first-child) { width: 24px; }
.text { display: flex; align-items: center; gap: 1px; padding: 0 6px 0 3px; height: 20px; }
.query { flex: 1; min-width: 0; height: 17px; margin-left: 2px; border: 0; border-top: 2px solid #8a8a8a; border-left: 2px solid #8a8a8a; background: #f0f0f0; }

.docks { flex: 411; min-width: 0; display: grid; grid-template-columns: 232fr 178fr; grid-template-rows: 217fr 219fr; font-family: Roboto, "Liberation Sans", sans-serif; font-size: 10px; }
.dock { display: flex; flex-direction: column; min-width: 0; min-height: 0; padding: 3px 3px 4px 4px; border-right: 1px solid #b8b8b8; border-bottom: 1px solid #b8b8b8; }
.dock-head { display: flex; align-items: center; gap: 5px; height: 12px; }
.dock-head i { flex: 1; height: 5px; border: 1px solid #b0b0b0; border-left: 0; background: #fff; }
.dock-head button { display: flex; width: 7px; }
.dock-head svg { width: 6px; height: 6px; stroke: #111; stroke-width: 2; }
.screen { flex: 1; min-height: 0; display: flex; flex-direction: column; padding: 5px 4px 4px 5px; border: 1px solid #777; background: #000; color: #c8c8c8; }
.screen.flush { padding: 0; }
.fill { display: block; flex: 1 1 auto; height: 0; min-height: 0; width: 100%; }
.screen dl { display: grid; grid-template-columns: 1fr auto; margin: 4px 0 0; line-height: 12px; font-size: 10px; }
.screen dd { margin: 0; text-align: right; }
.screen.data { padding: 4px 3px 0 4px; }
table { width: 100%; border-collapse: collapse; }
th, td { padding: 0; height: 12px; line-height: 12px; font-weight: 400; text-align: left; white-space: nowrap; font-size: 10px; }
th { width: 55px; }
.cell { position: relative; display: flex; justify-content: space-between; height: 11px; line-height: 12px; background: #3f3f3f; }
.cell b { position: absolute; top: 1px; height: 9px; line-height: 10px; padding-left: 1px; border-left: 3px solid #0c1; font-weight: 400; }
.green { color: #0d2; }

.status { display: flex; align-items: center; height: 19px; gap: 2px; padding-left: 1px; font-size: 11px; }
.ready { flex: 1; }
.cell-s { display: flex; align-items: center; height: 15px; padding-left: 1px; gap: 2px; border: 1px solid; border-color: #c4c4c4 #fff #fff #b0b0b0; overflow: hidden; white-space: nowrap; }
.cell-s svg { flex: none; width: 16px; height: 12px; }
.ntrip { width: 203px; margin-right: 21px; }
.gen { width: 104px; }
.port { width: 97px; }
.file { width: 113px; }
.proto { width: 41px; }
.time { width: 42px; }
.led { width: 18px; justify-content: center; }
.led i { width: 9px; height: 9px; border-radius: 50%; background: #19dc2a; border: 1px solid #6a6; }
.size { width: 14px; height: 12px; }

.behind { position: relative; height: 6px; overflow: hidden; }
.behind svg { display: block; width: 100%; height: 6px; }
.behind span { position: absolute; left: 207px; top: 0; font-family: Roboto, sans-serif; font-size: 6px; line-height: 6px; color: #888; }
.mark { position: absolute; border: 2px solid #ed2f24; border-radius: 3px; pointer-events: none; }
.m1 { left: 105px; top: 67px; width: 24px; height: 30px; }
.m2 { left: 197px; top: 158px; width: 267px; height: 32px; }
.m3 { left: 4px; top: 187px; width: 142px; height: 26px; }
.credit { position: absolute; right: 37px; bottom: 30px; display: flex; align-items: center; gap: 5px; color: #fff; font-family: "Noto Sans CJK SC", sans-serif; font-size: 27px; line-height: 38px; white-space: nowrap; text-shadow: 1px 1px 1px #222, -1px 0 1px #222; }
.credit svg { width: 44px; height: 38px; }
.ime { position: absolute; right: 0; bottom: 0; }
.ime svg { display: block; width: 36px; height: 16px; }
</style>
